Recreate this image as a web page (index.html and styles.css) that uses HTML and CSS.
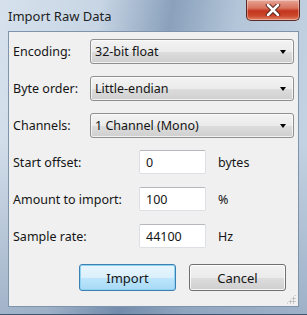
FILE: index.html
```html
<!DOCTYPE html>
<html lang="en">
<head>
  <meta charset="UTF-8" />
  <title>Import Raw Data</title>
  <link rel="stylesheet" href="styles.css">
</head>
<body>
  <div class="window">
    <div class="titlebar">
      <span class="title">Import Raw Data</span>
      <button class="close" aria-label="Close">
        <svg width="16" height="12" viewBox="0 0 16 12">
          <path d="M3 1 L13 11 M13 1 L3 11" stroke="#4a1a14" stroke-width="4.4" stroke-linecap="round"/>
          <path d="M3 1 L13 11 M13 1 L3 11" stroke="#fff" stroke-width="2.6" stroke-linecap="round"/>
        </svg>
      </button>
    </div>

    <div class="client">
      <div class="row">
        <label class="lbl">Encoding:</label>
        <div class="combo"><span>32-bit float</span><i class="arrow"></i></div>
      </div>
      <div class="row">
        <label class="lbl">Byte order:</label>
        <div class="combo"><span>Little-endian</span><i class="arrow"></i></div>
      </div>
      <div class="row">
        <label class="lbl">Channels:</label>
        <div class="combo"><span>1 Channel (Mono)</span><i class="arrow"></i></div>
      </div>

      <div class="row field">
        <label class="lbl wide">Start offset:</label>
        <input class="txt" value="0">
        <span class="unit">bytes</span>
      </div>
      <div class="row field">
        <label class="lbl wide">Amount to import:</label>
        <input class="txt" value="100">
        <span class="unit">%</span>
      </div>
      <div class="row field">
        <label class="lbl wide">Sample rate:</label>
        <input class="txt" value="44100">
        <span class="unit">Hz</span>
      </div>

      <div class="buttons">
        <button class="btn default">Import</button>
        <button class="btn">Cancel</button>
      </div>

      <div class="grip"></div>
    </div>
  </div>
</body>
</html>
```

FILE: styles.css
```css
html, body {
  margin: 0;
  padding: 0;
}
body {
  font-family: "Noto Sans", "Open Sans", sans-serif;
  font-size: 12.5px;
  color: #151515;
}
.window {
  width: 307px;
  height: 315px;
  box-sizing: border-box;
  padding: 0 8px 7px 8px;
  display: flex;
  flex-direction: column;
  background:
    linear-gradient(rgba(60, 90, 130, 0) 0%, rgba(60, 90, 130, 0) 45%, rgba(60, 90, 130, 0.3) 100%),
    linear-gradient(100deg, #d6e1ec 0%, #c7d5e4 28%, #8aa1bc 48%, #b3c5d8 66%, #c9d7e6 100%);
  border-bottom: 1px solid #3f5570;
}
.titlebar {
  height: 31px;
  display: flex;
  align-items: flex-start;
}
.title {
  margin-top: 7px;
  font-size: 13px;
  color: #1e1e1e;
  flex: 1;
}
.close {
  width: 54px;
  height: 21px;
  margin-right: -1px;
  padding: 0;
  border: 1px solid #5c2a24;
  border-top: none;
  border-radius: 0 0 5px 5px;
  background: linear-gradient(#e8a597 0%, #d7735e 40%, #c3341c 55%, #cc4a2e 80%, #e0866a 100%);
  box-shadow: inset 0 0 0 1px rgba(255,255,255,0.35);
  display: flex;
  align-items: center;
  justify-content: center;
}
.client {
  flex: 1;
  position: relative;
  background: #f0f0f0;
  border: 1px solid #7f93ab;
  padding: 7px 4px 0 4px;
  display: flex;
  flex-direction: column;
}
.row {
  display: flex;
  align-items: center;
  height: 25px;
  margin-bottom: 12px;
}
.row.field {
  height: 24px;
  margin-bottom: 13px;
}
.lbl {
  width: 77px;
  flex: none;
}
.lbl.wide {
  width: 126px;
}
.combo {
  width: 204px;
  height: 25px;
  box-sizing: border-box;
  border: 1px solid #8e8f8f;
  border-radius: 3px;
  background: linear-gradient(#f3f3f3 0%, #ebebeb 50%, #dddddd 51%, #cfcfcf 100%);
  box-shadow: inset 0 0 0 1px rgba(255,255,255,0.7);
  display: flex;
  align-items: center;
  padding: 0 7px 0 4px;
}
.combo span {
  flex: 1;
}
.arrow {
  width: 0;
  height: 0;
  border-left: 3.5px solid transparent;
  border-right: 3.5px solid transparent;
  border-top: 4px solid #000;
}
.txt {
  width: 67px;
  height: 24px;
  box-sizing: border-box;
  border: 1px solid #dcdfe3;
  border-top-color: #b5b9be;
  border-radius: 2px;
  background: #fff;
  font: inherit;
  color: #151515;
  padding: 0 6px;
  margin: 0;
}
.unit {
  margin-left: 12px;
}
.buttons {
  display: flex;
  justify-content: flex-end;
  gap: 13px;
  margin-top: 3px;
  padding-right: 8px;
}
.btn {
  width: 97px;
  height: 27px;
  font: inherit;
  font-size: 13px;
  color: #151515;
  border: 1px solid #707070;
  border-radius: 3px;
  background: linear-gradient(#f2f2f2 0%, #ebebeb 50%, #dddddd 51%, #cfcfcf 100%);
  box-shadow: inset 0 0 0 1px rgba(255,255,255,0.8);
  padding: 0;
}
.btn.default {
  border-color: #3c7fb1;
  background: linear-gradient(#eaf6fd 0%, #d9f0fc 50%, #bee6fd 51%, #a7d9f5 100%);
  box-shadow: inset 0 0 0 1px #8fd4f5;
}
.grip {
  position: absolute;
  right: 2px;
  bottom: 2px;
  width: 10px;
  height: 10px;
  background-image: radial-gradient(circle, #a8a8a8 0.8px, transparent 1.2px);
  background-size: 3px 3px;
  clip-path: polygon(100% 0, 100% 100%, 0 100%);
}
```
